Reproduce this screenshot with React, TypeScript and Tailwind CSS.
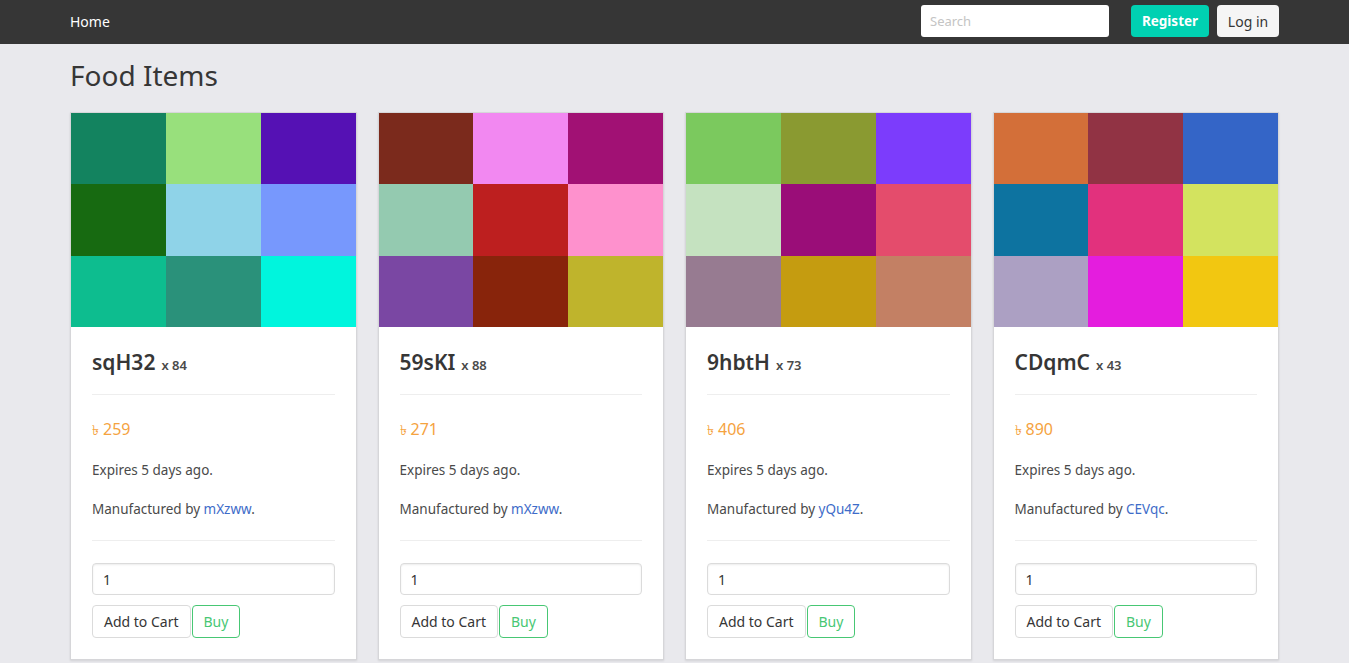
import React from 'react';

interface Item {
  name: string;
  qty: number;
  price: number;
  maker: string;
  colors: string[];
}

const items: Item[] = [
  {
    name: 'sqH32',
    qty: 84,
    price: 259,
    maker: 'mXzww',
    colors: ['#13835f', '#98e07c', '#5511b4', '#176a11', '#8fd3e8', '#7798fd', '#0dbd8f', '#2a917a', '#00f5dd'],
  },
  {
    name: '59sKI',
    qty: 88,
    price: 271,
    maker: 'mXzww',
    colors: ['#7b2a1c', '#f288f1', '#a11174', '#94cab0', '#bd1f1f', '#fe91cd', '#7a47a3', '#88240b', '#bfb42c'],
  },
  {
    name: '9hbtH',
    qty: 73,
    price: 406,
    maker: 'yQu4Z',
    colors: ['#7bc95e', '#8a9a31', '#7c3cfc', '#c5e2c0', '#9a0d78', '#e44c6c', '#977b91', '#c59c10', '#c38064'],
  },
  {
    name: 'CDqmC',
    qty: 43,
    price: 890,
    maker: 'CEVqc',
    colors: ['#d36f39', '#913344', '#3465c7', '#0d73a0', '#e2317d', '#d3e35f', '#aca0c3', '#e41dde', '#f2c711'],
  },
];

function FoodCard({ item }: { item: Item }) {
  return (
    <div className="bg-white border border-[#d6d6d9] shadow-[0_1px_2px_rgba(10,10,10,0.1)]">
      <div className="grid grid-cols-3 grid-rows-3 h-[214px]">
        {item.colors.map((c, i) => (
          <div key={i} style={{ backgroundColor: c }} />
        ))}
      </div>
      <div className="px-[21px] pt-[20px] pb-[21px]">
        <div className="flex items-baseline gap-[6px] h-[30px] leading-[30px]">
          <span className="text-[21px] font-semibold text-[#363636]">{item.name}</span>
          <span className="text-[13px] font-semibold text-[#4a4a4a]">x {item.qty}</span>
        </div>
        <div className="mt-[17px] h-px bg-[#eeeeee]" />
        <div className="mt-[22px] h-[24px] leading-[24px] text-[16px] text-[#f5a33f]">
          <span className="text-[14px] mr-[4px]">৳</span>{item.price}
        </div>
        <div className="mt-[19px] h-[20px] leading-[20px] text-[13.5px] text-[#4a4a4a]">Expires 5 days ago.</div>
        <div className="mt-[19px] h-[20px] leading-[20px] text-[13.5px] text-[#4a4a4a]">
          Manufactured by <a className="text-[#3e6cc9]">{item.maker}</a>.
        </div>
        <div className="mt-[21px] h-px bg-[#eeeeee]" />
        <input
          defaultValue="1"
          className="mt-[22px] block w-full h-[32px] px-[10px] text-[14px] text-[#363636] border border-[#dbdbdb] rounded-[4px] shadow-[inset_0_1px_2px_rgba(10,10,10,0.08)] outline-none"
        />
        <div className="mt-[10px] flex gap-[1px]">
          <button className="h-[33px] px-[11px] text-[14px] text-[#363636] bg-white border border-[#dbdbdb] rounded-[4px]">
            Add to Cart
          </button>
          <button className="h-[33px] px-[11px] text-[14px] text-[#48c774] bg-white border border-[#48c774] rounded-[4px]">
            Buy
          </button>
        </div>
      </div>
    </div>
  );
}

export default function App() {
  return (
    <div className="min-h-[663px] bg-[#e9e9ed] font-['Noto_Sans',sans-serif]">
      <nav className="h-[44px] bg-[#363636]">
        <div className="w-[1209px] mx-auto h-full flex items-center">
          <a className="text-[14px] text-white -mt-[2px]">Home</a>
          <div className="ml-auto flex items-center -mt-[2px]">
            <input
              placeholder="Search"
              className="w-[188px] h-[32px] px-[9px] text-[13px] bg-white rounded-[3px] placeholder:text-[#c4c4c4] outline-none"
            />
            <button className="ml-[22px] w-[78px] h-[32px] bg-[#00d1b2] text-white text-[13.5px] font-bold rounded-[4px]">
              Register
            </button>
            <button className="ml-[8px] w-[62px] h-[32px] bg-[#f5f5f5] text-[#363636] text-[14px] rounded-[4px]">
              Log in
            </button>
          </div>
        </div>
      </nav>
      <div className="w-[1209px] mx-auto">
        <h1 className="pt-[13px] h-[68px] leading-[36px] text-[28px] font-normal text-[#363636]">Food Items</h1>
        <div className="grid grid-cols-4 gap-[21px]">
          {items.map((it) => (
            <FoodCard key={it.name} item={it} />
          ))}
        </div>
      </div>
    </div>
  );
}
